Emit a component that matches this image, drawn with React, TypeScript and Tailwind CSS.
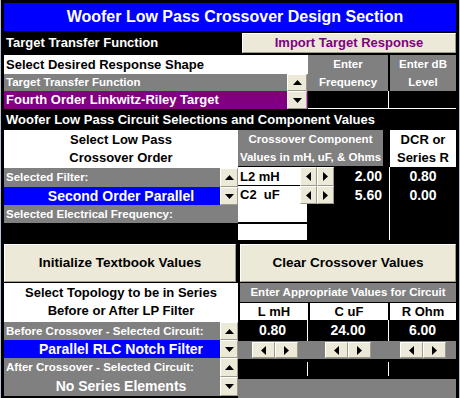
import React from "react";

type Dir = "up" | "down" | "left" | "right";

const Tri: React.FC<{ dir: Dir }> = ({ dir }) => {
  const vert = dir === "up" || dir === "down";
  const pts = {
    up: "0,5 4.5,0 9,5",
    down: "0,0 9,0 4.5,5",
    left: "5,0 5,9 0,4.5",
    right: "0,0 0,9 5,4.5",
  }[dir];
  return (
    <svg width={vert ? 9 : 5} height={vert ? 5 : 9} viewBox={vert ? "0 0 9 5" : "0 0 5 9"}>
      <polygon points={pts} fill="black" />
    </svg>
  );
};

const ArrowBtn: React.FC<{ dir: Dir; className?: string }> = ({ dir, className = "" }) => (
  <div
    className={`flex shrink-0 items-center justify-center bg-[#ece9d8] border border-t-white border-l-white border-b-[#9d9a8a] border-r-[#9d9a8a] ${className}`}
  >
    <Tri dir={dir} />
  </div>
);

const Pair: React.FC = () => (
  <div className="flex">
    <ArrowBtn dir="left" className="w-[23px] h-[16px]" />
    <ArrowBtn dir="right" className="w-[23px] h-[16px]" />
  </div>
);

const App: React.FC = () => {
  return (
    <div className="w-[460px] h-[398px] overflow-hidden bg-black border-x border-[#b7c3da] px-[3px] pt-[3px] font-['Liberation_Sans',Arial,sans-serif] font-bold text-white">
      {/* title */}
      <div className="h-[28px] flex items-center justify-center bg-[#0000ff] pl-[10px] text-[16px]">
        Woofer Low Pass Crossover Design Section
      </div>

      {/* target transfer function */}
      <div className="mt-[2px] h-[20px] flex">
        <div className="flex-1 pl-[2px] text-[13px] leading-[20px]">Target Transfer Function</div>
        <div className="w-[214px] flex items-center justify-center bg-[#ece9d8] border border-t-white border-l-white border-b-[#9d9a8a] border-r-[#9d9a8a] text-[13px] text-[#800080]">
          Import Target Response
        </div>
      </div>

      <div className="mt-[2px] flex">
        <div className="w-[304px]">
          <div className="h-[19px] bg-white pl-[2px] text-[13px] leading-[19px] text-black">
            Select Desired Response Shape
          </div>
          <div className="h-[17px] flex bg-[#808080]">
            <div className="flex-1 pl-[2px] text-[11.5px] leading-[17px]">Target Transfer Function</div>
            <ArrowBtn dir="up" className="w-[20px] mr-[1px]" />
          </div>
          <div className="h-[18px] flex bg-[#800080]">
            <div className="flex-1 pl-[2px] text-[13px] leading-[18px]">Fourth Order Linkwitz-Riley Target</div>
            <ArrowBtn dir="down" className="w-[20px] mr-[1px]" />
          </div>
        </div>
        <div className="flex-1 flex flex-col">
          <div className="h-[36px] flex gap-[2px] text-[11.5px] leading-[18px] text-center">
            <div className="w-[80px] bg-[#808080]">
              Enter
              <br />
              Frequency
            </div>
            <div className="flex-1 bg-[#808080]">
              Enter dB
              <br />
              Level
            </div>
          </div>
          <div className="h-[18px] flex border-b border-white">
            <div className="w-[81px] border-r border-white" />
          </div>
        </div>
      </div>

      <div className="mt-[1px] h-[19px] pl-[2px] text-[13px] leading-[19px]">
        Woofer Low Pass Circuit Selections and Component Values
      </div>

      {/* crossover order */}
      <div className="mt-[1px] h-[110px] flex">
        <div className="w-[234px] flex flex-col">
          <div className="h-[38px] bg-white text-black text-[13px] leading-[18px] text-center pt-[1px]">
            Select Low Pass
            <br />
            Crossover Order
          </div>
          <div className="h-[19px] flex bg-[#808080]">
            <div className="flex-1 pl-[2px] text-[11.5px] leading-[19px]">Selected Filter:</div>
            <ArrowBtn dir="up" className="w-[18px]" />
          </div>
          <div className="h-[18px] flex bg-[#0000ff]">
            <div className="flex-1 pl-[18px] text-center text-[14px] leading-[18px]">Second Order Parallel</div>
            <ArrowBtn dir="down" className="w-[18px]" />
          </div>
          <div className="h-[18px] bg-[#808080] pl-[2px] text-[11.5px] leading-[18px]">
            Selected Electrical Frequency:
          </div>
        </div>

        <div className="w-[151px] flex flex-col">
          <div className="w-[145px] h-[36px] bg-[#808080] text-[11.5px] leading-[18px] text-center">
            Crossover Component
            <br />
            Values in mH, uF, &amp; Ohms
          </div>
          <div className="mt-[1px] h-[19px] flex">
            <div className="w-[62px] bg-white border-b border-black pl-[2px] text-[13px] leading-[19px] text-black">
              L2 mH
            </div>
            <ArrowBtn dir="left" className="w-[17px]" />
            <ArrowBtn dir="right" className="w-[17px]" />
            <div className="flex-1 pr-[7px] text-right text-[14px] leading-[19px]">2.00</div>
          </div>
          <div className="h-[18px] flex">
            <div className="w-[62px] bg-white pl-[2px] text-[13px] leading-[18px] text-black">C2&nbsp; uF</div>
            <ArrowBtn dir="left" className="w-[17px]" />
            <ArrowBtn dir="right" className="w-[17px]" />
            <div className="flex-1 pr-[7px] text-right text-[14px] leading-[18px]">5.60</div>
          </div>
          <div className="w-[69px] h-[18px] bg-white" />
          <div className="mt-[2px] w-[69px] h-[16px] bg-white" />
        </div>

        <div className="flex-1 flex flex-col">
          <div className="h-[37px] ml-[1px] bg-white text-black text-[13px] leading-[18px] text-center pt-[1px]">
            DCR or
            <br />
            Series R
          </div>
          <div className="flex-1 border-l border-white text-center text-[14px]">
            <div className="h-[19px] leading-[19px]">0.80</div>
            <div className="h-[18px] leading-[18px]">0.00</div>
          </div>
        </div>
      </div>

      {/* buttons */}
      <div className="mt-[4px] h-[38px] flex gap-[4px] text-[13.5px] text-black">
        <div className="w-[232px] flex items-center justify-center bg-[#ece9d8] border border-t-white border-l-white border-b-[#9d9a8a] border-r-[#9d9a8a]">
          Initialize Textbook Values
        </div>
        <div className="flex-1 flex items-center justify-center bg-[#ece9d8] border border-t-white border-l-white border-b-[#9d9a8a] border-r-[#9d9a8a]">
          Clear Crossover Values
        </div>
      </div>

      {/* topology */}
      <div className="mt-[1px] flex">
        <div className="w-[234px] flex flex-col">
          <div className="h-[39px] bg-white text-black text-[13px] leading-[18px] text-center pt-[1px]">
            Select Topology to be in Series
            <br />
            Before or After LP Filter
          </div>
          <div className="h-[18px] flex bg-[#808080]">
            <div className="flex-1 pl-[2px] text-[11.5px] leading-[18px]">Before Crossover - Selected Circuit:</div>
            <ArrowBtn dir="up" className="w-[18px]" />
          </div>
          <div className="h-[18px] flex bg-[#0000ff]">
            <div className="flex-1 pl-[18px] text-center text-[14px] leading-[18px]">Parallel RLC Notch Filter</div>
            <ArrowBtn dir="down" className="w-[18px]" />
          </div>
          <div className="h-[19px] flex bg-[#808080]">
            <div className="flex-1 pl-[2px] text-[11.5px] leading-[19px]">After Crossover - Selected Circuit:</div>
            <ArrowBtn dir="up" className="w-[18px]" />
          </div>
          <div className="h-[19px] flex bg-[#808080]">
            <div className="flex-1 pl-[18px] text-center text-[14px] leading-[19px]">No Series Elements</div>
            <ArrowBtn dir="down" className="w-[18px]" />
          </div>
        </div>

        <div className="flex-1 flex flex-col">
          <div className="ml-[2px] h-[19px] bg-[#808080] text-center text-[11.5px] leading-[19px]">
            Enter Appropriate Values for Circuit
          </div>
          <div className="ml-[2px] mt-[1px] h-[17px] flex gap-[2px] text-black text-[13px] leading-[17px] text-center">
            <div className="w-[68px] bg-white">L mH</div>
            <div className="w-[78px] bg-white">C uF</div>
            <div className="flex-1 bg-white">R Ohm</div>
          </div>
          <div className="h-[21px] flex text-center text-[14px] leading-[21px]">
            <div className="w-[70px] border-r border-white">0.80</div>
            <div className="w-[81px] border-r border-white">24.00</div>
            <div className="flex-1">6.00</div>
          </div>
          <div className="h-[18px] flex items-center bg-[#808080]">
            <div className="w-[70px] pl-[14px]">
              <Pair />
            </div>
            <div className="w-[81px] pl-[17px]">
              <Pair />
            </div>
            <div className="flex-1 pl-[11px]">
              <Pair />
            </div>
          </div>
          <div className="h-[20px] flex py-[3px]">
            <div className="w-[70px] border-r border-white" />
            <div className="w-[81px] border-r border-white" />
          </div>
          <div className="h-[19px] bg-[#808080]" />
        </div>
      </div>
    </div>
  );
};

export default App;
